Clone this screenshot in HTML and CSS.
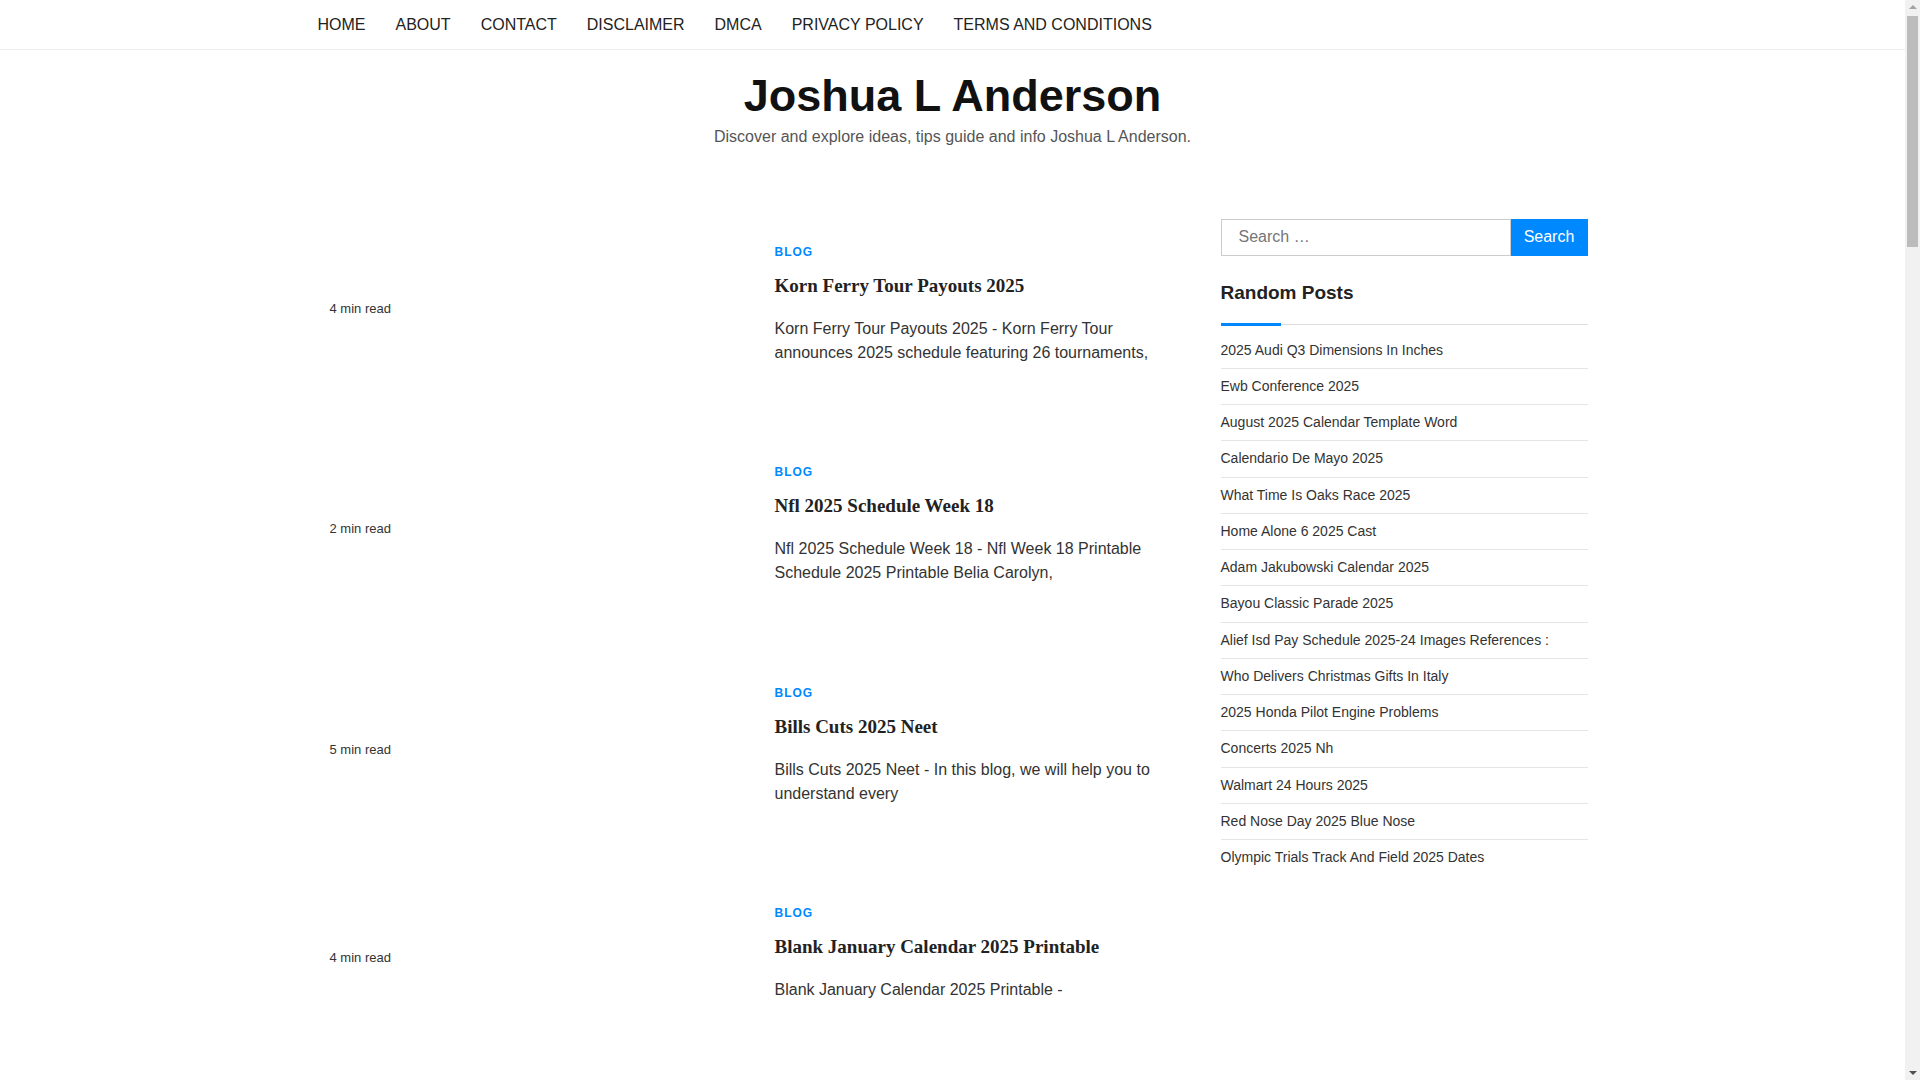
FILE: index.html
```html
<!DOCTYPE html>
<html lang="en">
<head>
  <meta charset="UTF-8" />
  <meta name="viewport" content="width=device-width, initial-scale=1.0"/>
  <title>Joshua L Anderson</title>
  <link rel="stylesheet" href="styles.css">
</head>
<body>
  <div class="page">
    <div class="topbar">
      <ul class="menu wrap">
        <li><a href="#">HOME</a></li>
        <li><a href="#">ABOUT</a></li>
        <li><a href="#">CONTACT</a></li>
        <li><a href="#">DISCLAIMER</a></li>
        <li><a href="#">DMCA</a></li>
        <li><a href="#">PRIVACY POLICY</a></li>
        <li><a href="#">TERMS AND CONDITIONS</a></li>
      </ul>
    </div>

    <header class="site-header">
      <h1 class="site-title"><a href="#">Joshua L Anderson</a></h1>
      <p class="site-desc">Discover and explore ideas, tips guide and info Joshua L Anderson.</p>
    </header>

    <div class="wrap layout">
      <main class="posts">
        <article class="post">
          <div class="post-thumb"><span class="read-time">4 min read</span></div>
          <div class="post-body">
            <a class="cat" href="#">BLOG</a>
            <h2 class="post-title"><a href="#">Korn Ferry Tour Payouts 2025</a></h2>
            <p class="excerpt">Korn Ferry Tour Payouts 2025 - Korn Ferry Tour announces 2025 schedule featuring 26 tournaments,</p>
          </div>
        </article>

        <article class="post">
          <div class="post-thumb"><span class="read-time">2 min read</span></div>
          <div class="post-body">
            <a class="cat" href="#">BLOG</a>
            <h2 class="post-title"><a href="#">Nfl 2025 Schedule Week 18</a></h2>
            <p class="excerpt">Nfl 2025 Schedule Week 18 - Nfl Week 18 Printable Schedule 2025 Printable Belia Carolyn,</p>
          </div>
        </article>

        <article class="post">
          <div class="post-thumb"><span class="read-time">5 min read</span></div>
          <div class="post-body">
            <a class="cat" href="#">BLOG</a>
            <h2 class="post-title"><a href="#">Bills Cuts 2025 Neet</a></h2>
            <p class="excerpt">Bills Cuts 2025 Neet - In this blog, we will help you to understand every</p>
          </div>
        </article>

        <article class="post">
          <div class="post-thumb"><span class="read-time">4 min read</span></div>
          <div class="post-body">
            <a class="cat" href="#">BLOG</a>
            <h2 class="post-title"><a href="#">Blank January Calendar 2025 Printable</a></h2>
            <p class="excerpt">Blank January Calendar 2025 Printable -</p>
          </div>
        </article>

        <article class="post">
          <div class="post-thumb"><span class="read-time">3 min read</span></div>
          <div class="post-body">
            <a class="cat" href="#">BLOG</a>
            <h2 class="post-title"><a href="#">Ewb Conference 2025</a></h2>
            <p class="excerpt">Ewb Conference 2025 - Find out everything about the upcoming event,</p>
          </div>
        </article>
      </main>

      <aside class="sidebar">
        <form class="search" onsubmit="return false">
          <input type="search" placeholder="Search …">
          <button type="submit">Search</button>
        </form>

        <h3 class="widget-title">Random Posts</h3>
        <ul class="random">
          <li><a href="#">2025 Audi Q3 Dimensions In Inches</a></li>
          <li><a href="#">Ewb Conference 2025</a></li>
          <li><a href="#">August 2025 Calendar Template Word</a></li>
          <li><a href="#">Calendario De Mayo 2025</a></li>
          <li><a href="#">What Time Is Oaks Race 2025</a></li>
          <li><a href="#">Home Alone 6 2025 Cast</a></li>
          <li><a href="#">Adam Jakubowski Calendar 2025</a></li>
          <li><a href="#">Bayou Classic Parade 2025</a></li>
          <li><a href="#">Alief Isd Pay Schedule 2025-24 Images References :</a></li>
          <li><a href="#">Who Delivers Christmas Gifts In Italy</a></li>
          <li><a href="#">2025 Honda Pilot Engine Problems</a></li>
          <li><a href="#">Concerts 2025 Nh</a></li>
          <li><a href="#">Walmart 24 Hours 2025</a></li>
          <li><a href="#">Red Nose Day 2025 Blue Nose</a></li>
          <li><a href="#">Olympic Trials Track And Field 2025 Dates</a></li>
        </ul>
      </aside>
    </div>
  </div>

  <!-- stand-in for the window scrollbar seen in the screenshot -->
  <div class="scrollbar">
    <span class="sb-up"></span>
    <span class="sb-thumb"></span>
    <span class="sb-down"></span>
  </div>
</body>
</html>
```

FILE: styles.css
```css
body { margin: 0; font-family: "Liberation Sans", Arial, sans-serif; color: #222; background: #fff; }
a { color: inherit; text-decoration: none; }
.page { margin-right: 15px; }
.wrap { width: 1270px; margin: 0 auto; }

.topbar { border-bottom: 1px solid #eee; }
.menu { list-style: none; padding: 0; display: flex; gap: 30px; height: 49px; align-items: center; margin-top: 0; margin-bottom: 0; }
.menu a { font-size: 16px; color: #222; line-height: 49px; }

.site-header { text-align: center; }
.site-title { margin: 19.5px 0 0; font-size: 45px; line-height: 52px; font-weight: bold; color: #111; }
.site-desc { margin: 3px 0 0; font-size: 16px; line-height: 24px; color: #555; }

.layout { display: grid; grid-template-columns: 1fr 367px; gap: 30px; margin-top: 70px; }

.post { display: flex; align-items: center; padding: 24px 0 64.5px; }
.post-thumb { width: 427px; padding-left: 12px; box-sizing: border-box; margin-right: 30px; }
.read-time { font-size: 13px; line-height: 20px; color: #333; }
.post-body { width: 390px; padding-bottom: 10px; }
.cat { display: block; font-size: 12px; line-height: 18px; font-weight: bold; letter-spacing: 1px; color: #0088ff; }
.post-title { margin: 12px 0 0; font-family: "Liberation Serif", "Times New Roman", serif; font-size: 19px; line-height: 26px; font-weight: bold; color: #222; }
.excerpt { margin: 18px 0 0; font-size: 16px; line-height: 24px; color: #333; }

.search { display: flex; height: 37px; }
.search input { flex: 1; min-width: 0; border: 1px solid #ccc; padding: 0 17px; font-family: inherit; font-size: 16px; color: #333; outline: none; }
.search input::placeholder { color: #757575; }
.search button { width: 77px; border: 0; background: #0088ff; color: #fff; font-family: inherit; font-size: 16px; cursor: pointer; }

.widget-title {
  margin: 25px 0 0; padding-bottom: 21px; font-size: 19px; line-height: 24px; font-weight: bold; color: #222;
  background:
    linear-gradient(#0088ff, #0088ff) left bottom / 60px 3px no-repeat,
    linear-gradient(#ddd, #ddd) left bottom 1px / 100% 1px no-repeat;
}
.random { list-style: none; margin: 7px 0 0; padding: 0; }
.random li { font-size: 14px; line-height: 21.25px; padding: 7px 0; color: #333; }
.random li + li { border-top: 1px solid #e5e5e5; }

.scrollbar { position: fixed; top: 0; right: 0; bottom: 0; width: 15px; background: #f1f1f1; display: flex; flex-direction: column; align-items: center; }
.sb-up, .sb-down { width: 0; height: 0; border-left: 4px solid transparent; border-right: 4px solid transparent; margin: 5px 0; }
.sb-up { border-bottom: 4px solid #a3a3a3; }
.sb-down { border-top: 4px solid #505050; margin-top: auto; }
.sb-thumb { width: 11px; height: 231px; margin-top: 2px; background: #bcbcbc; }
```
